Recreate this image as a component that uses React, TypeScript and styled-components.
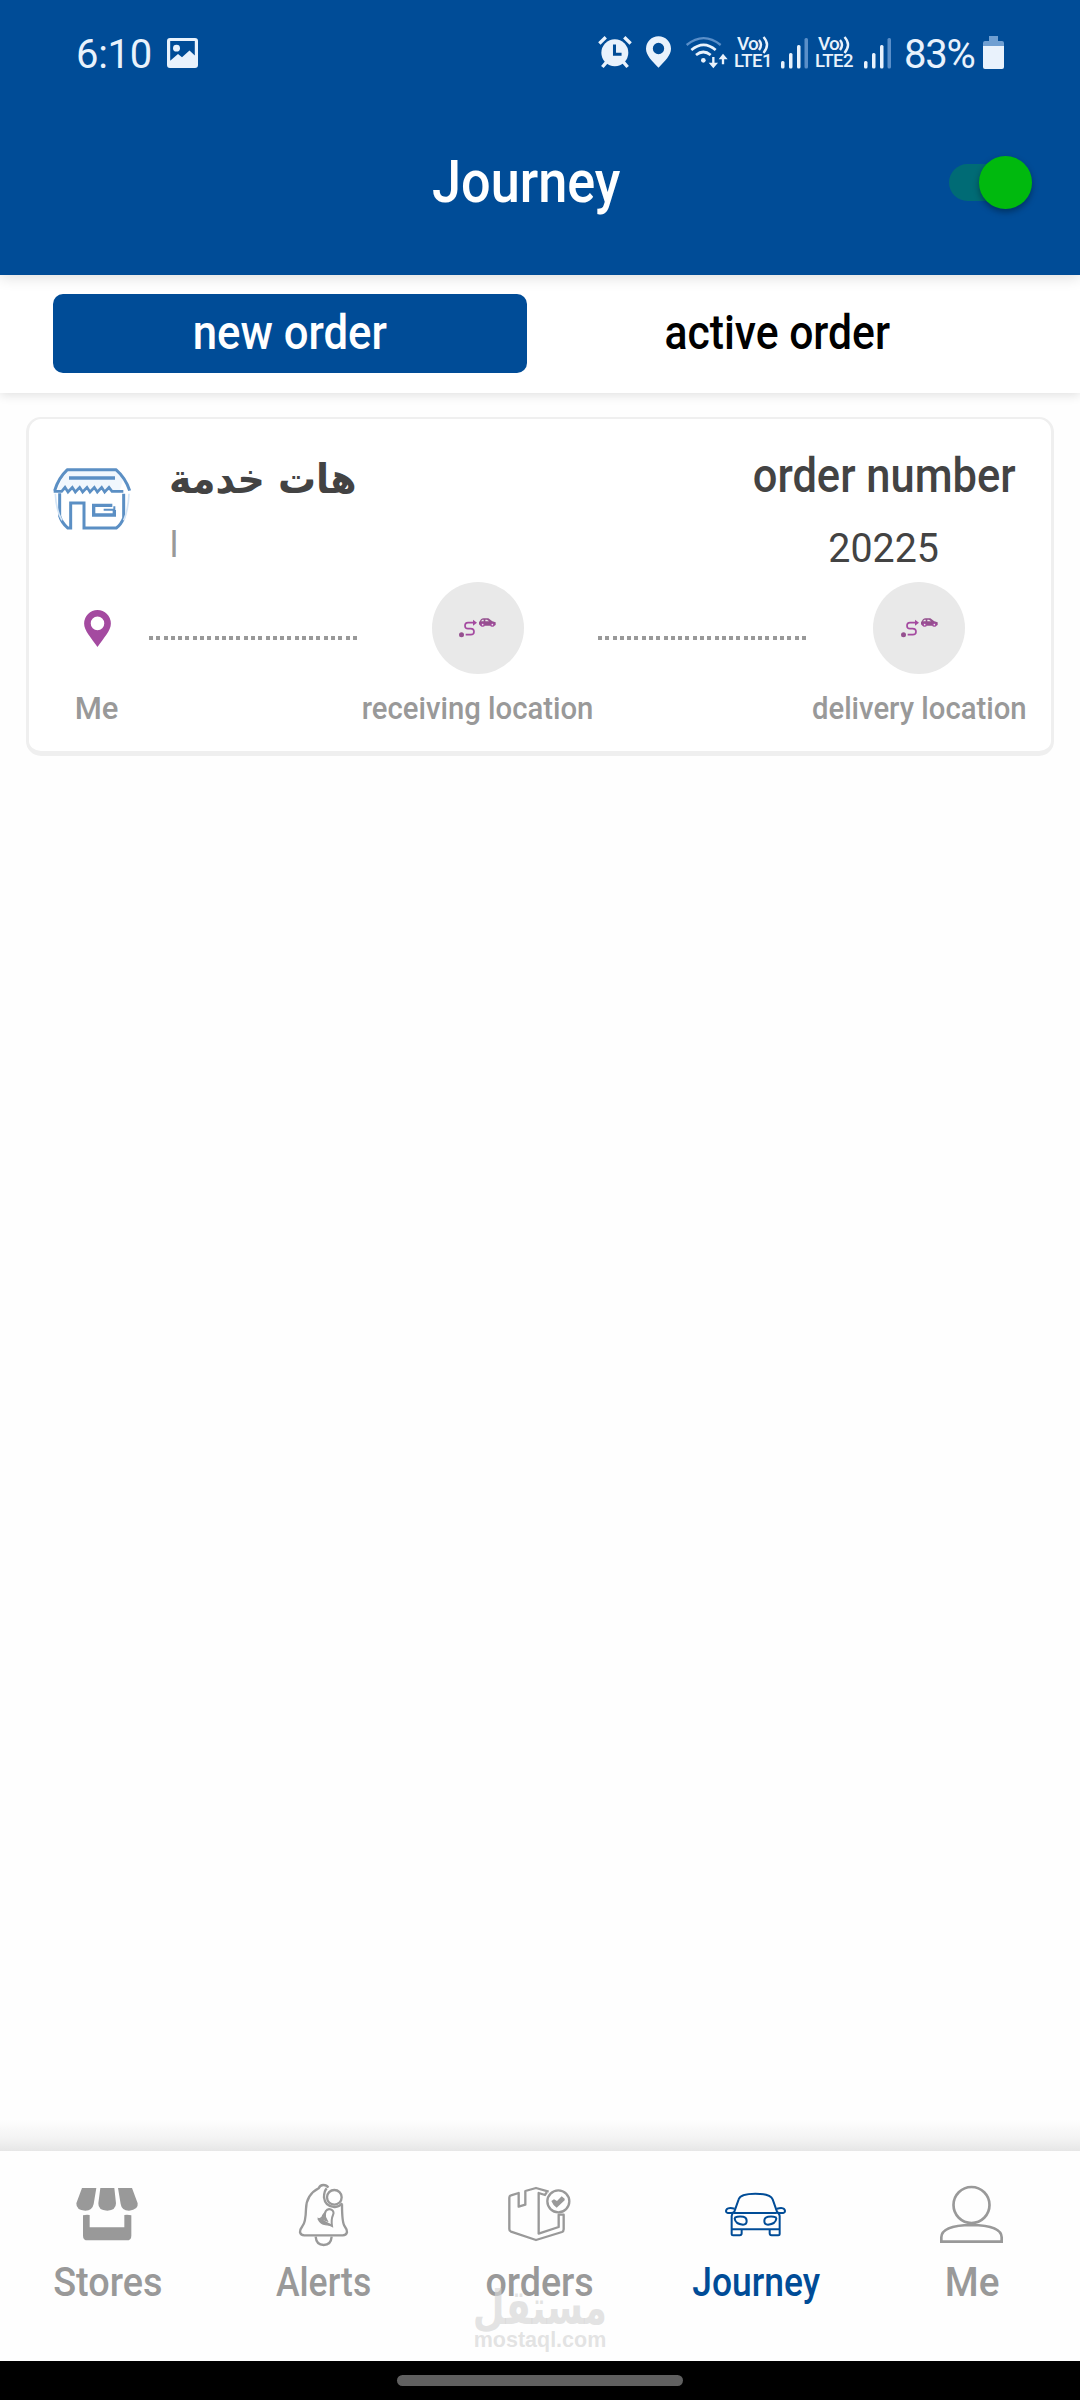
import React from "react";
import styled, { createGlobalStyle } from "styled-components";

const BLUE = "#004c97";
const GREY = "#999999";
const DARK = "#434343";
const PURPLE = "#a44aa0";
const ICE = "#e9f2fc";

const GlobalStyle = createGlobalStyle`
  *, *::before, *::after { box-sizing: border-box; }
  body { margin: 0; background: #ffffff; font-family: Roboto, "Liberation Sans", sans-serif; }
  svg { display: block; flex: none; overflow: visible; }
`;

const Screen = styled.div`
  width: 1080px;
  height: 2400px;
  display: flex;
  flex-direction: column;
  background: #fefefe;
  overflow: hidden;
`;

const Label = styled.span<{
  $size: number;
  $squeeze?: number;
  $weight?: number;
  $color?: string;
}>`
  display: inline-block;
  white-space: nowrap;
  line-height: 1;
  font-size: ${(p) => p.$size}px;
  font-weight: ${(p) => p.$weight ?? 500};
  color: ${(p) => p.$color ?? "inherit"};
  transform: scaleX(${(p) => p.$squeeze ?? 1});
`;

/* ---------- header ---------- */

const Header = styled.header`
  flex: none;
  height: 275px;
  background: ${BLUE};
  color: #ffffff;
  box-shadow: 0 2px 14px rgba(0, 0, 0, 0.14);
  z-index: 2;
`;

const StatusBar = styled.div`
  height: 108px;
  padding: 0 76px 0 76px;
  display: flex;
  justify-content: space-between;
  color: ${ICE};
`;

const StatusGroup = styled.div`
  display: flex;
  align-items: flex-start;
  padding-top: 36px;
`;

const Clock = styled.span`
  width: 91px;
  margin-top: -1px;
  font-size: 40px;
  line-height: 39px;
  letter-spacing: -0.3px;
`;

const Percent = styled.span`
  width: 79px;
  margin-top: -1px;
  font-size: 40px;
  line-height: 39px;
  letter-spacing: -1.2px;
`;

const Lte = styled.div<{ $width: number }>`
  width: ${(p) => p.$width}px;
  display: flex;
  flex-direction: column;
  font-weight: 500;
  white-space: nowrap;
`;

const VoRow = styled.div`
  display: flex;
  height: 17px;
  padding-left: 3px;
`;

const VoLine = styled.span`
  letter-spacing: -0.8px;
  font-size: 19px;
  line-height: 16px;
`;

const LteLine = styled.span`
  letter-spacing: -0.5px;
  font-size: 18.5px;
  line-height: 17px;
`;

const Gap = styled.i<{ $w: number }>`
  width: ${(p) => p.$w}px;
  flex: none;
`;

const TitleRow = styled.div`
  height: 148px;
  display: grid;
  grid-template-columns: 1fr 300px 1fr;
  align-items: center;
  padding: 0 48px 0 21px;
`;

const Title = styled.h1`
  grid-column: 2;
  margin: 0;
  display: flex;
  justify-content: center;
  font-weight: 500;
`;

const Switch = styled.button`
  justify-self: end;
  width: 83px;
  height: 37px;
  padding: 0;
  border: 0;
  border-radius: 19px;
  background: #006b75;
  display: flex;
  align-items: center;
  justify-content: flex-end;
`;

const Thumb = styled.span`
  width: 53px;
  height: 53px;
  flex: none;
  border-radius: 50%;
  background: #00b90e;
  box-shadow: 0 3px 6px rgba(0, 0, 0, 0.35);
`;

/* ---------- tabs ---------- */

const Tabs = styled.nav`
  flex: none;
  height: 118px;
  padding: 19px 53px 20px;
  display: grid;
  grid-template-columns: 474px 1fr;
  background: #ffffff;
  box-shadow: 0 2px 10px rgba(0, 0, 0, 0.12);
  z-index: 1;
`;

const Tab = styled.button<{ $active?: boolean }>`
  border: 0;
  border-radius: 10px;
  padding: 0 0 1px;
  display: flex;
  align-items: center;
  justify-content: center;
  font-family: inherit;
  background: ${(p) => (p.$active ? BLUE : "transparent")};
  color: ${(p) => (p.$active ? "#ffffff" : "#000000")};
`;

/* ---------- order card ---------- */

const Content = styled.main`
  flex: 1;
  padding: 24px 26px;
`;

const Card = styled.article`
  height: 339px;
  border: solid #efefef;
  border-width: 2px 3px 5px 3px;
  border-radius: 15px;
  background: #ffffff;
  display: flex;
  flex-direction: column;
`;

const CardTop = styled.div`
  height: 163px;
  flex: none;
  display: flex;
  justify-content: space-between;
`;

const Store = styled.div`
  display: flex;
  padding: 49px 0 0 24px;
  gap: 38px;
`;

const StoreText = styled.div`
  display: flex;
  flex-direction: column;
  align-items: flex-start;
  margin-top: -17px;
`;

const StoreName = styled.span`
  font-family: "DejaVu Sans", sans-serif;
  font-weight: 700;
  font-size: 41px;
  line-height: 56px;
  color: ${DARK};
  white-space: nowrap;
  transform: scaleX(0.925);
  transform-origin: left center;
`;

const StoreNote = styled.span`
  font-family: "DejaVu Sans", sans-serif;
  font-size: 36px;
  line-height: 40px;
  margin-top: 18px;
  color: ${GREY};
`;

const OrderNumber = styled.div`
  width: 333px;
  padding-top: 33px;
  display: flex;
  flex-direction: column;
  align-items: center;
  color: ${DARK};
`;

const OrderValue = styled.div`
  margin-top: 28px;
  padding-right: 2px;
`;

const Route = styled.div`
  padding-left: 16px;
  display: grid;
  grid-template-columns: 104px 208px 241px 208px 226px;
  justify-items: center;
`;

const Stop = styled.div`
  display: flex;
  flex-direction: column;
  align-items: center;
  width: 0;
`;

const StopMark = styled.div<{ $filled?: boolean }>`
  width: 92px;
  height: 92px;
  flex: none;
  border-radius: 50%;
  display: flex;
  align-items: center;
  justify-content: center;
  background: ${(p) => (p.$filled ? "#e9e9e9" : "transparent")};
`;

const StopLabel = styled.div`
  margin-top: 18px;
`;

const DotLine = styled.div`
  width: 208px;
  height: 4px;
  margin-top: 54px;
  display: flex;
  justify-content: space-between;
`;

const Dot = styled.i`
  width: 4px;
  height: 4px;
  background: ${GREY};
`;

/* ---------- bottom navigation ---------- */

const BottomNav = styled.footer`
  position: relative;
  flex: none;
  height: 210px;
  display: grid;
  grid-template-columns: repeat(5, 1fr);
  background: #fefefe;
`;

const NavShade = styled.div`
  flex: none;
  height: 31px;
  background: linear-gradient(to bottom, #fefefe, #f3f3f3 60%, #e6e6e6);
`;

const NavItem = styled.a<{ $active?: boolean }>`
  display: flex;
  flex-direction: column;
  align-items: center;
  color: ${(p) => (p.$active ? BLUE : GREY)};
`;

const NavIcon = styled.div`
  height: 112px;
  padding-top: 30px;
`;

const Watermark = styled.div`
  position: absolute;
  left: 465px;
  top: 134px;
  width: 150px;
  display: flex;
  flex-direction: column;
  align-items: center;
  color: rgba(214, 214, 214, 0.68);
`;

const WatermarkName = styled.span`
  font-family: "DejaVu Sans", sans-serif;
  font-weight: 700;
  font-size: 48px;
  line-height: 44px;
  transform: scaleX(0.765);
`;

const WatermarkSite = styled.span`
  font-family: "Liberation Sans", sans-serif;
  font-weight: 700;
  font-size: 21.5px;
  line-height: 22px;
`;

const HomeBar = styled.div`
  flex: none;
  height: 39px;
  background: #000000;
  display: flex;
  justify-content: center;
  padding-top: 14px;
`;

const HomePill = styled.div`
  width: 286px;
  height: 11px;
  border-radius: 6px;
  background: #606060;
`;

/* ---------- icons ---------- */

const IconDrop = styled.div`
  padding-top: 2px;
`;

const PictureIcon = () => (
  <IconDrop>
    <svg width="31" height="30" viewBox="0 0 31 31" preserveAspectRatio="none">
      <path
        fill={ICE}
        fillRule="evenodd"
        d="M3 0h25a3 3 0 0 1 3 3v25a3 3 0 0 1-3 3H3a3 3 0 0 1-3-3V3a3 3 0 0 1 3-3zM3.200 3.200V23.500L11 16.500l4 3.500 7.500-7 5.300 5V3.200z"
      />
      <circle cx="9.500" cy="10.500" r="3.500" fill={ICE} />
    </svg>
  </IconDrop>
);

const AlarmIcon = () => (
  <svg width="34" height="32" viewBox="116 110 99 95">
    <circle cx="165" cy="160" r="40" fill={ICE} />
    <g stroke={ICE} strokeWidth="10">
      <path d="M119 132l19-18M212 132l-19-18M128 202l13-15M203 202l-13-15" />
    </g>
    <path d="M164 135v29h21" fill="none" stroke={BLUE} strokeWidth="9" />
  </svg>
);

const StatusPin = () => (
  <svg width="25" height="32" viewBox="261 110 75 95">
    <path
      fill={ICE}
      fillRule="evenodd"
      d="M298.500 110a37.500 37.500 0 0 1 37.500 38c0 20-18 36-37.500 57-19.500-21-37.500-37-37.500-57a37.500 37.500 0 0 1 37.500-38zm0 20a17 17 0 1 0 0 34 17 17 0 0 0 0-34z"
    />
  </svg>
);

const WifiIcon = () => (
  <svg width="42" height="32" viewBox="381 108 126 96" fill="none">
    <path d="M383 135q51-41 102 0" stroke="#5a8fc9" strokeWidth="7" />
    <path d="M397 150q37-31 73 0M411 165q22-18 44 0" stroke={ICE} strokeWidth="8" />
    <circle cx="433" cy="181" r="7" fill={ICE} />
    <path d="M463 171v25M492 193v-25" stroke={ICE} strokeWidth="7" />
    <path d="M449 188h28l-14 17zM479 178h27l-14-17z" fill={ICE} />
  </svg>
);

const SignalIcon = () => (
  <IconDrop>
    <svg width="27" height="31" viewBox="0 0 27 31">
      <rect x="0" y="23" width="3.500" height="7.500" rx="1.500" fill={ICE} />
      <rect x="8" y="15" width="3.500" height="15.500" rx="1.500" fill={ICE} />
      <rect x="16" y="7" width="3.500" height="23.500" rx="1.500" fill={ICE} />
      <rect x="23.500" y="0" width="3.500" height="30.500" rx="1.500" fill="#5a8fc9" />
    </svg>
  </IconDrop>
);

const VoWaves = () => (
  <svg width="11" height="17" viewBox="0 0 11 17" fill="none" stroke={ICE} strokeWidth="2.400">
    <path d="M1 4q4 4.500 0 10M5.500 1q7 7.500 0 16" />
  </svg>
);

const BatteryIcon = () => (
  <svg width="21" height="33" viewBox="0 0 21 33">
    <path d="M6 0h9v5h4a2 2 0 0 1 2 2v4H0V7a2 2 0 0 1 2-2h4z" fill="#6f9fd2" />
    <path d="M0 10h21v21a2 2 0 0 1-2 2H2a2 2 0 0 1-2-2z" fill={ICE} />
  </svg>
);

const ShopLogo = () => (
  <svg width="78" height="62" viewBox="158 205 234 186" fill="none" stroke="#5b8fc4" strokeWidth="9">
    <path d="M184 240l20-28h142l22 28-10 34H170z" fill="#f1f7fd" stroke="none" />
    <path d="M200 210h148M202 209q-28 26-39 64M346 209q30 26 42 64" />
    <path d="M206 235h138" strokeWidth="10" />
    <path d="M160 275h24l10-12 9 14 13-14 9 14 13-14 9 14 13-14 9 14 13-14 9 14 13-14 9 14 13-14 9 12h34" strokeWidth="8" />
    <path d="M178 281v68q6 20 24 36h9v-75h40v75h97q14-10 22-30V282" />
    <path d="M342 331v15h-62v-29h56" strokeWidth="10" />
    <path d="M342 320v10h-32" strokeWidth="6" />
    <path d="M165 282q2 50 20 80M386 282q-2 50-16 80" stroke="#d4e5f6" strokeWidth="5" />
  </svg>
);

const PinIcon = () => (
  <svg width="27" height="37" viewBox="252 626 81 112">
    <path
      fill={PURPLE}
      fillRule="evenodd"
      d="M292.500 626a40.500 41 0 0 1 40.500 41c0 22-20 41-40.500 71-20.500-30-40.500-49-40.500-71a40.500 41 0 0 1 40.500-41zm0 20a20.500 20.500 0 1 0 0 41 20.500 20.500 0 0 0 0-41z"
    />
  </svg>
);

const RouteIcon = () => (
  <svg width="37" height="20" viewBox="354 233 111 60">
    <circle cx="361.500" cy="283" r="7.500" fill="#95508f" />
    <path
      d="M374 283h15a10 9 0 0 0 0-18h-8a9 9 0 0 1 0-18h20"
      fill="none"
      stroke={PURPLE}
      strokeWidth="5"
    />
    <path d="M396 238l12 9-12 9z" fill={PURPLE} />
    <path
      fill="#95508f"
      fillRule="evenodd"
      d="M414 252v-6l6-9q3-3 8-3h14l12 9 10 3v8l-4 2h-42zM420 243h8v-5h-4zM433 243h11l-6-5h-5z"
    />
    <circle cx="425" cy="253" r="6.500" fill={PURPLE} />
    <circle cx="454" cy="253" r="6.500" fill={PURPLE} />
    <circle cx="425" cy="253" r="2.500" fill="#e9e9e9" />
    <circle cx="454" cy="253" r="2.500" fill="#e9e9e9" />
  </svg>
);

const iconFrame = { width: 80, height: 80, fill: "none", stroke: "currentColor" };

const StoresIcon = () => (
  <svg {...iconFrame} viewBox="204 183 240 240" stroke="none">
    <g fill="currentColor">
      <path d="M246 204h43l-8 48q-4 20-25 20-28-1-27-22zM301 204h42l5 46q0 21-26 22-28 0-27-22zM354 204h42l17 46q3 20-26 22-22 0-25-20z" />
      <path d="M249 286q10-3 20-1v37h104v-37q10-2 21 1v61q0 14-14 14H263q-14 0-14-14z" />
    </g>
  </svg>
);

const AlertsIcon = () => (
  <svg {...iconFrame} viewBox="852 183 240 240" strokeWidth="7">
    <path d="M985 203q-5-8-15-8-10 0-14 10-37 19-38 62-1 41-11 52-7 9-7 18 2 9 13 9h115q11 0 13-9 0-9-7-18-8-10-8-66" />
    <path d="M947 350q2 25 24 25t24-25M980 205q-8 8-8 27 3 27 31 29 14 1 24-11" />
    <circle cx="1003" cy="232" r="22" />
    <path d="M977 274q6-10 17-5 10 6 5 16-6 13-3 33l-38-20q17-10 19-24z" strokeWidth="6" />
    <path d="M955 296l39 20-18-2q-18-3-21-18zM968 286l8-10v15l6 12-16-6z" fill="currentColor" strokeWidth="4" />
  </svg>
);

const OrdersIcon = () => (
  <svg {...iconFrame} viewBox="360 183 240 240" strokeWidth="7">
    <path d="M506 215l-38-11-32 9v41l-20 6v-41l-23 7q-5 1-5 7v94q0 6 5 8l75 25 78-24q5-2 5-8v-44h-15v37l-60 20V219l19 6 5-8" strokeLinejoin="round" />
    <circle cx="535" cy="244" r="33" />
    <path d="M514 243l8-5 9 5 14-14 9 7v5l-24 22q-11-7-16-20z" fill="currentColor" stroke="none" />
  </svg>
);

const JourneyIcon = () => (
  <svg {...iconFrame} viewBox="168 183 240 240" strokeWidth="6">
    <path d="M222 278l14-40q5-17 50-17t52 17l14 40M222 279h128M222 276q-6 3-7 12v55q0 3 4 3h20q6 0 6-6v-12M350 276q8 3 9 12v55q0 3-4 3h-20q-6 0-6-6v-12M215 328h144" />
    <path d="M224 266q-26-6-26 8 0 8 22 4M351 266q24-6 24 8 0 8-22 4" />
    <path d="M226 292q8-4 24-2 10 2 10 13 0 11-11 11-23-2-25-18zM347 292q-8-4-23-2-11 2-11 13 0 11 11 11 23-2 25-18z" />
  </svg>
);

const MeIcon = () => (
  <svg {...iconFrame} viewBox="816 183 240 240" strokeWidth="8">
    <circle cx="934.500" cy="255" r="54" />
    <path d="M844 365v-13q1-36 90-37 90 1 91 37v13z" />
  </svg>
);

/* ---------- screen ---------- */

const Dots = () => (
  <DotLine>
    {Array.from({ length: 29 }, (_, i) => (
      <Dot key={i} />
    ))}
  </DotLine>
);

const VoLte = ({ line, width }: { line: string; width: number }) => (
  <Lte $width={width}>
    <VoRow>
      <VoLine>Vo</VoLine>
      <VoWaves />
    </VoRow>
    <LteLine>{line}</LteLine>
  </Lte>
);

const navItems = [
  { label: "Stores", Icon: StoresIcon, squeeze: 0.945 },
  { label: "Alerts", Icon: AlertsIcon, squeeze: 0.89 },
  { label: "orders", Icon: OrdersIcon, squeeze: 0.94 },
  { label: "Journey", Icon: JourneyIcon, squeeze: 0.885, active: true },
  { label: "Me", Icon: MeIcon, squeeze: 0.97 },
];

export default function App() {
  return (
    <Screen>
      <GlobalStyle />
      <Header>
        <StatusBar>
          <StatusGroup>
            <Clock>6:10</Clock>
            <PictureIcon />
          </StatusGroup>
          <StatusGroup>
            <AlarmIcon />
            <Gap $w={14} />
            <StatusPin />
            <Gap $w={15} />
            <WifiIcon />
            <Gap $w={6} />
            <VoLte line="LTE1" width={47} />
            <SignalIcon />
            <Gap $w={7} />
            <VoLte line="LTE2" width={49} />
            <SignalIcon />
            <Gap $w={13} />
            <Percent>83%</Percent>
            <BatteryIcon />
          </StatusGroup>
        </StatusBar>
        <TitleRow>
          <Title>
            <Label $size={60} $squeeze={0.87}>Journey</Label>
          </Title>
          <Switch aria-label="Availability">
            <Thumb />
          </Switch>
        </TitleRow>
      </Header>

      <Tabs>
        <Tab $active>
          <Label $size={48.5} $squeeze={0.9}>new order</Label>
        </Tab>
        <Tab>
          <Label $size={48.5} $squeeze={0.88}>active order</Label>
        </Tab>
      </Tabs>

      <Content>
        <Card>
          <CardTop>
            <Store>
              <ShopLogo />
              <StoreText>
                <StoreName dir="rtl">هات خدمة</StoreName>
                <StoreNote dir="rtl">ا</StoreNote>
              </StoreText>
            </Store>
            <OrderNumber>
              <Label $size={48} $squeeze={0.905}>order number</Label>
              <OrderValue>
                <Label $size={41} $squeeze={0.96} $weight={400}>20225</Label>
              </OrderValue>
            </OrderNumber>
          </CardTop>
          <Route>
            <Stop>
              <StopMark>
                <PinIcon />
              </StopMark>
              <StopLabel>
                <Label $size={32} $squeeze={0.97} $color={GREY}>Me</Label>
              </StopLabel>
            </Stop>
            <Dots />
            <Stop>
              <StopMark $filled>
                <RouteIcon />
              </StopMark>
              <StopLabel>
                <Label $size={32} $squeeze={0.915} $color={GREY}>receiving location</Label>
              </StopLabel>
            </Stop>
            <Dots />
            <Stop>
              <StopMark $filled>
                <RouteIcon />
              </StopMark>
              <StopLabel>
                <Label $size={32} $squeeze={0.915} $color={GREY}>delivery location</Label>
              </StopLabel>
            </Stop>
          </Route>
        </Card>
      </Content>

      <NavShade />
      <BottomNav>
        {navItems.map(({ label, Icon, squeeze, active }) => (
          <NavItem key={label} $active={active}>
            <NavIcon>
              <Icon />
            </NavIcon>
            <Label $size={40} $squeeze={squeeze}>{label}</Label>
          </NavItem>
        ))}
        <Watermark>
          <WatermarkName dir="rtl">مستقل</WatermarkName>
          <WatermarkSite>mostaql.com</WatermarkSite>
        </Watermark>
      </BottomNav>
      <HomeBar>
        <HomePill />
      </HomeBar>
    </Screen>
  );
}
